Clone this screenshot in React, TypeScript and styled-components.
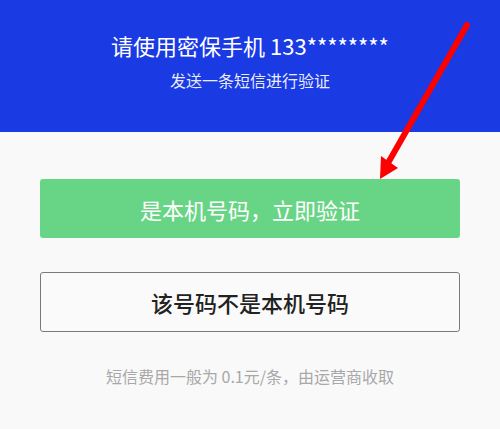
import React from "react";
import styled, { createGlobalStyle } from "styled-components";

const Global = createGlobalStyle`
  html, body { margin: 0; padding: 0; background: #f9f9f9; }
  body { font-family: "Noto Sans CJK SC", "Noto Sans", sans-serif; }
  * { box-sizing: border-box; }
`;

const Page = styled.div`
  position: relative;
  width: 500px;
  height: 429px;
  overflow: hidden;
  background: #f9f9f9;
`;

const Header = styled.header`
  height: 132px;
  background: #1a3ae4;
  display: flex;
  flex-direction: column;
  align-items: center;
  padding-top: 30px;
  color: #fff;
`;

const Title = styled.div`
  font-size: 22px;
  line-height: 30px;
  letter-spacing: 0;
`;

const Subtitle = styled.div`
  margin-top: 9px;
  font-size: 16px;
  line-height: 22px;
  color: rgba(255, 255, 255, 0.92);
`;

const Body = styled.main`
  display: flex;
  flex-direction: column;
  padding: 47px 40px 0;
`;

const Button = styled.button<{ $primary?: boolean }>`
  height: ${(p) => (p.$primary ? "59px" : "60px")};
  width: 100%;
  border-radius: 3px;
  font-family: "Noto Sans CJK SC", "Noto Sans", sans-serif;
  font-size: 22px;
  display: flex;
  align-items: center;
  justify-content: center;
  cursor: pointer;
  padding: 0;
  background: ${(p) => (p.$primary ? "#68d586" : "#fafafa")};
  color: ${(p) => (p.$primary ? "#ffffff" : "#222222")};
  border: ${(p) => (p.$primary ? "none" : "1.5px solid #7a7a7a")};
  font-weight: ${(p) => (p.$primary ? 400 : 500)};
  & + & {
    margin-top: 34px;
  }
`;

const Note = styled.p`
  margin: 33px 0 0;
  text-align: center;
  font-size: 16px;
  line-height: 22px;
  color: #a8a8a8;
`;

const Overlay = styled.svg`
  position: absolute;
  left: 0;
  top: 0;
  pointer-events: none;
`;

export default function App() {
  return (
    <>
      <Global />
      <Page>
        <Header>
          <Title>请使用密保手机 133********</Title>
          <Subtitle>发送一条短信进行验证</Subtitle>
        </Header>
        <Body>
          <Button $primary>是本机号码，立即验证</Button>
          <Button>该号码不是本机号码</Button>
          <Note>短信费用一般为 0.1元/条，由运营商收取</Note>
        </Body>
        <Overlay width="500" height="429" viewBox="0 0 500 429">
          <line x1="467" y1="25" x2="388" y2="163" stroke="#ff0000" strokeWidth="6" strokeLinecap="round" />
          <polygon points="380,179 381,156 398,168" fill="#ff0000" />
        </Overlay>
      </Page>
    </>
  );
}
